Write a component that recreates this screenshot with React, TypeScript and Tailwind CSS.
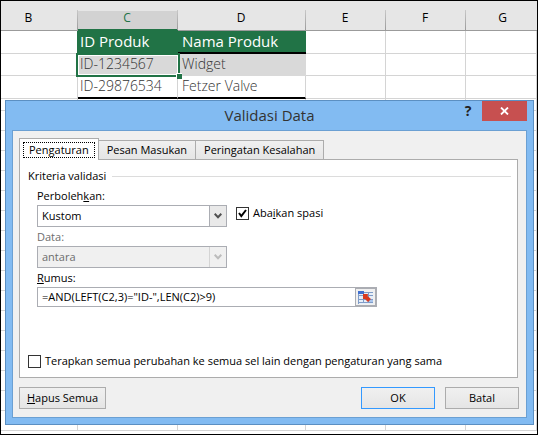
import { useState } from "react";
import type { ReactNode } from "react";
import clsx from "clsx";

const tabs = ["Pengaturan", "Pesan Masukan", "Peringatan Kesalahan"];

const columns = ["B", "C", "D", "E", "F", "G"];

// Empty rows below the product table
const emptyRows = Array.from({ length: 16 }, (_, i) => i);

function Cell({ className, children }: { className?: string; children?: ReactNode }) {
  return (
    <td className={clsx("border-r border-b border-[#d4d4d4] p-0", className)}>
      {children}
    </td>
  );
}

function Sheet() {
  return (
    <table className="w-full table-fixed border-separate border-spacing-0 text-left text-sm leading-5 text-[#333]">
      <colgroup>
        <col className="w-[77px]" />
        <col className="w-[100px]" />
        <col className="w-32" />
        <col className="w-20" />
        <col className="w-20" />
        <col />
      </colgroup>
      <thead>
        <tr className="h-[30px] text-xs leading-4 text-black">
          {columns.map((name) => (
            <th
              key={name}
              scope="col"
              className={clsx(
                "relative border-b p-0 pt-1 pr-0.5 text-center font-normal",
                name === "C"
                  ? "border-[#217346] text-[#217346]"
                  : "border-[#9b9b9b]",
              )}
            >
              {name === "C" && (
                <span className="absolute inset-x-0 top-2.5 bottom-0 border-b border-[#217346] bg-[#d2d2d2]" />
              )}
              <span className={clsx("relative", name === "B" && "pr-5", name === "G" && "pl-1")}>
                {name}
              </span>
              {name !== "G" && (
                <span className="absolute right-0 bottom-0 h-5 w-px bg-linear-to-b from-[#c8c8c8] to-[#9b9b9b]" />
              )}
            </th>
          ))}
        </tr>
      </thead>
      <tbody>
        <tr className="h-[23px] align-top text-[15px] text-white">
          <Cell />
          <td className="bg-[#217346] p-0 pl-0.5 shadow-[-1px_0_#217346]">
            ID Produk
          </td>
          <td className="border-b-2 border-black bg-[#217346] p-0 pl-1">
            Nama Produk
          </td>
          <Cell />
          <Cell />
          <Cell />
        </tr>
        <tr className="h-[22px] align-top font-light">
          <Cell />
          <td className="relative bg-[#d9d9d9] p-0 pl-0.5">
            ID-1234567
            {/* Selected cell outline and fill handle */}
            <span className="absolute -inset-x-0.5 -top-px -bottom-px border-2 border-[#217346]">
              <span className="absolute inset-0 border border-white" />
              <span className="absolute -right-1 -bottom-1 size-1.5 border-t border-l border-white bg-[#217346]" />
            </span>
          </td>
          <td className="bg-[#d9d9d9] p-0 pl-1">Widget</td>
          <Cell />
          <Cell />
          <Cell />
        </tr>
        <tr className="h-[23px] align-top font-light">
          <Cell />
          <td className="border-r border-b-2 border-r-[#d4d4d4] border-b-black p-0 pl-0.5">
            ID-29876534
          </td>
          <td className="border-r border-b-2 border-r-[#d4d4d4] border-b-black p-0 pl-1">
            Fetzer Valve
          </td>
          <Cell />
          <Cell />
          <Cell />
        </tr>
        <tr className="h-3">
          {columns.map((name) => (
            <Cell key={name} />
          ))}
        </tr>
        {emptyRows.map((row) => (
          <tr key={row} className="h-5">
            {columns.map((name) => (
              <Cell key={name} />
            ))}
          </tr>
        ))}
      </tbody>
    </table>
  );
}

function DropDown({
  id,
  value,
  disabled,
}: {
  id: string;
  value: string;
  disabled?: boolean;
}) {
  return (
    <div
      className={clsx(
        "relative h-[22px] w-[190px] border border-[#abadb3]",
        disabled ? "bg-[#f0f0f0] text-[#6d6d6d]" : "bg-white",
      )}
    >
      <select
        id={id}
        disabled={disabled}
        className="block h-full w-full appearance-none pl-1 leading-5"
      >
        <option>{value}</option>
      </select>
      <span
        className={clsx(
          "pointer-events-none absolute inset-y-0 right-0 flex w-[17px] items-center justify-center border-l",
          disabled
            ? "border-[#d4d4d4] text-[#bcbcbc]"
            : "border-[#abadb3] bg-[#e9e9e9] text-[#505050]",
        )}
      >
        <svg width="8" height="6" viewBox="0 0 8 6" fill="none" stroke="currentColor" strokeWidth="2">
          <path d="M0.7 0.8 L4 4.2 L7.3 0.8" />
        </svg>
      </span>
    </div>
  );
}

function CheckBox({
  id,
  checked,
  children,
}: {
  id: string;
  checked?: boolean;
  children: ReactNode;
}) {
  const [on, setOn] = useState(Boolean(checked));

  return (
    <div className="flex h-4 items-center gap-1">
      <span className="relative size-[13px]">
        <input
          id={id}
          type="checkbox"
          checked={on}
          onChange={(e) => setOn(e.target.checked)}
          className="block size-[13px] appearance-none border border-[#333] bg-white"
        />
        {on && (
          <svg className="pointer-events-none absolute inset-0" width="13" height="13" viewBox="0 0 13 13" fill="none" stroke="#000" strokeWidth="2">
            <path d="M3 6 L5.3 9 L10 3" />
          </svg>
        )}
      </span>
      <label htmlFor={id}>{children}</label>
    </div>
  );
}

function PushButton({ className, children }: { className: string; children: ReactNode }) {
  return (
    <button
      className={clsx(
        "h-[22px] border bg-linear-to-b from-[#f0f0f0] to-[#e5e5e5] leading-5",
        className,
      )}
    >
      {children}
    </button>
  );
}

function RangeIcon() {
  return (
    <svg width="15" height="13" viewBox="0 0 15 13">
      <rect x="0" y="1" width="15" height="12" fill="#e6eef8" />
      <rect x="0" y="0" width="6" height="3" fill="#3f6fd0" />
      <rect x="10" y="9" width="5" height="3" fill="#a9c6ee" />
      <path
        d="M6 1.5 H15 M0 4.5 H15 M0 8.5 H15 M1 11.5 H15 M.5 3 V13 M5.5 3 V12 M10.5 1 V12"
        stroke="#7f9cc8"
        fill="none"
      />
      <path d="M5 3 H10 L9.5 5 L13 8 L10 11 L7 8 L5 8 Z" fill="#d93a20" />
    </svg>
  );
}

function SettingsPanel() {
  return (
    <div className="-mt-px border border-[#acacac] bg-white pt-2 pr-1.5 pb-2 pl-2">
      <div className="flex h-4 items-center gap-1.5">
        <span>Kriteria validasi</span>
        <span className="h-px flex-1 bg-[#dcdcdc]" />
      </div>

      <div className="mt-1 pl-[9px]">
        <label htmlFor="allow" className="block">
          Perboleh<u>k</u>an:
        </label>
        <div className="mt-px flex gap-[9px]">
          <DropDown id="allow" value="Kustom" />
          <CheckBox id="ignore-blank" checked>
            Aba<u>i</u>kan spasi
          </CheckBox>
        </div>

        <label htmlFor="data" className="mt-0.5 block text-[#6d6d6d]">
          Data:
        </label>
        <div className="mt-px">
          <DropDown id="data" value="antara" disabled />
        </div>

        <label htmlFor="formula" className="mt-0.5 block">
          <u>R</u>umus:
        </label>
        <div className="mt-px flex h-5 w-[340px] border border-[#abadb3]">
          <input
            id="formula"
            type="text"
            defaultValue={'=AND(LEFT(C2,3)="ID-",LEN(C2)>9)'}
            className="min-w-0 flex-1 pl-1"
          />
          <button
            aria-label="Ciutkan dialog"
            className="flex w-[21px] items-center justify-center border border-[#abadb3] bg-[#f0f0f0]"
          >
            <RangeIcon />
          </button>
        </div>
      </div>

      <div className="mt-[46px]">
        <CheckBox id="apply-all">
          Terapkan semua perubahan ke semua sel lain dengan pengaturan yang sama
        </CheckBox>
      </div>
    </div>
  );
}

function ValidationDialog() {
  return (
    <div
      role="dialog"
      aria-labelledby="dialog-title"
      className="absolute top-[99px] right-[3px] left-1 border border-[#5b8fc2] bg-[#82bbf2] px-1.5 pb-1.5 text-[11px] leading-4 text-black"
    >
      <div className="relative h-[29px]">
        <h1 id="dialog-title" className="text-center text-[15px] leading-7 text-[#333]">
          Validasi Data
        </h1>
        <div className="absolute top-0 right-0 flex">
          <button className="w-7 text-sm leading-5 font-bold text-[#222]">?</button>
          <button
            aria-label="Tutup"
            className="flex h-5 w-[45px] items-center justify-center bg-[#c75050]"
          >
            <svg width="9" height="8" viewBox="0 0 9 8" stroke="#fff" strokeWidth="1.8">
              <path d="M1 .5 L8 7.5 M8 .5 L1 7.5" />
            </svg>
          </button>
        </div>
      </div>

      <div className="border border-[#6ba0d3] bg-[#f0f0f0] pt-[7px] pr-[7px] pb-2 pl-1.5">
        <div className="pr-px">
          <div role="tablist" className="flex items-end">
            {tabs.map((tab, i) => (
              <button
                key={tab}
                role="tab"
                aria-selected={i === 0}
                className={clsx(
                  "border border-[#acacac]",
                  i === 0
                    ? "relative h-[22px] border-b-0 bg-white px-[3px]"
                    : "-ml-px h-5 bg-linear-to-b from-[#f0f0f0] to-[#e5e5e5] px-2",
                )}
              >
                {i === 0 ? (
                  <span className="block border border-dotted border-black px-[5px] leading-[14px]">
                    {tab}
                  </span>
                ) : (
                  tab
                )}
              </button>
            ))}
          </div>
          <SettingsPanel />
        </div>

        <div className="mt-[9px] flex gap-2.5">
          <PushButton className="mr-auto w-[87px] border-[#acacac]">
            <u>H</u>apus Semua
          </PushButton>
          <PushButton className="w-[74px] border-[#3399ff]">OK</PushButton>
          <PushButton className="w-[74px] border-[#acacac]">Batal</PushButton>
        </div>
      </div>
    </div>
  );
}

export default function App() {
  return (
    <div className="relative h-screen overflow-hidden border border-black bg-[linear-gradient(#e6e6e6_30px,#fff_30px)] font-['Open_Sans','Noto_Sans',sans-serif]">
      <Sheet />
      <ValidationDialog />
    </div>
  );
}
